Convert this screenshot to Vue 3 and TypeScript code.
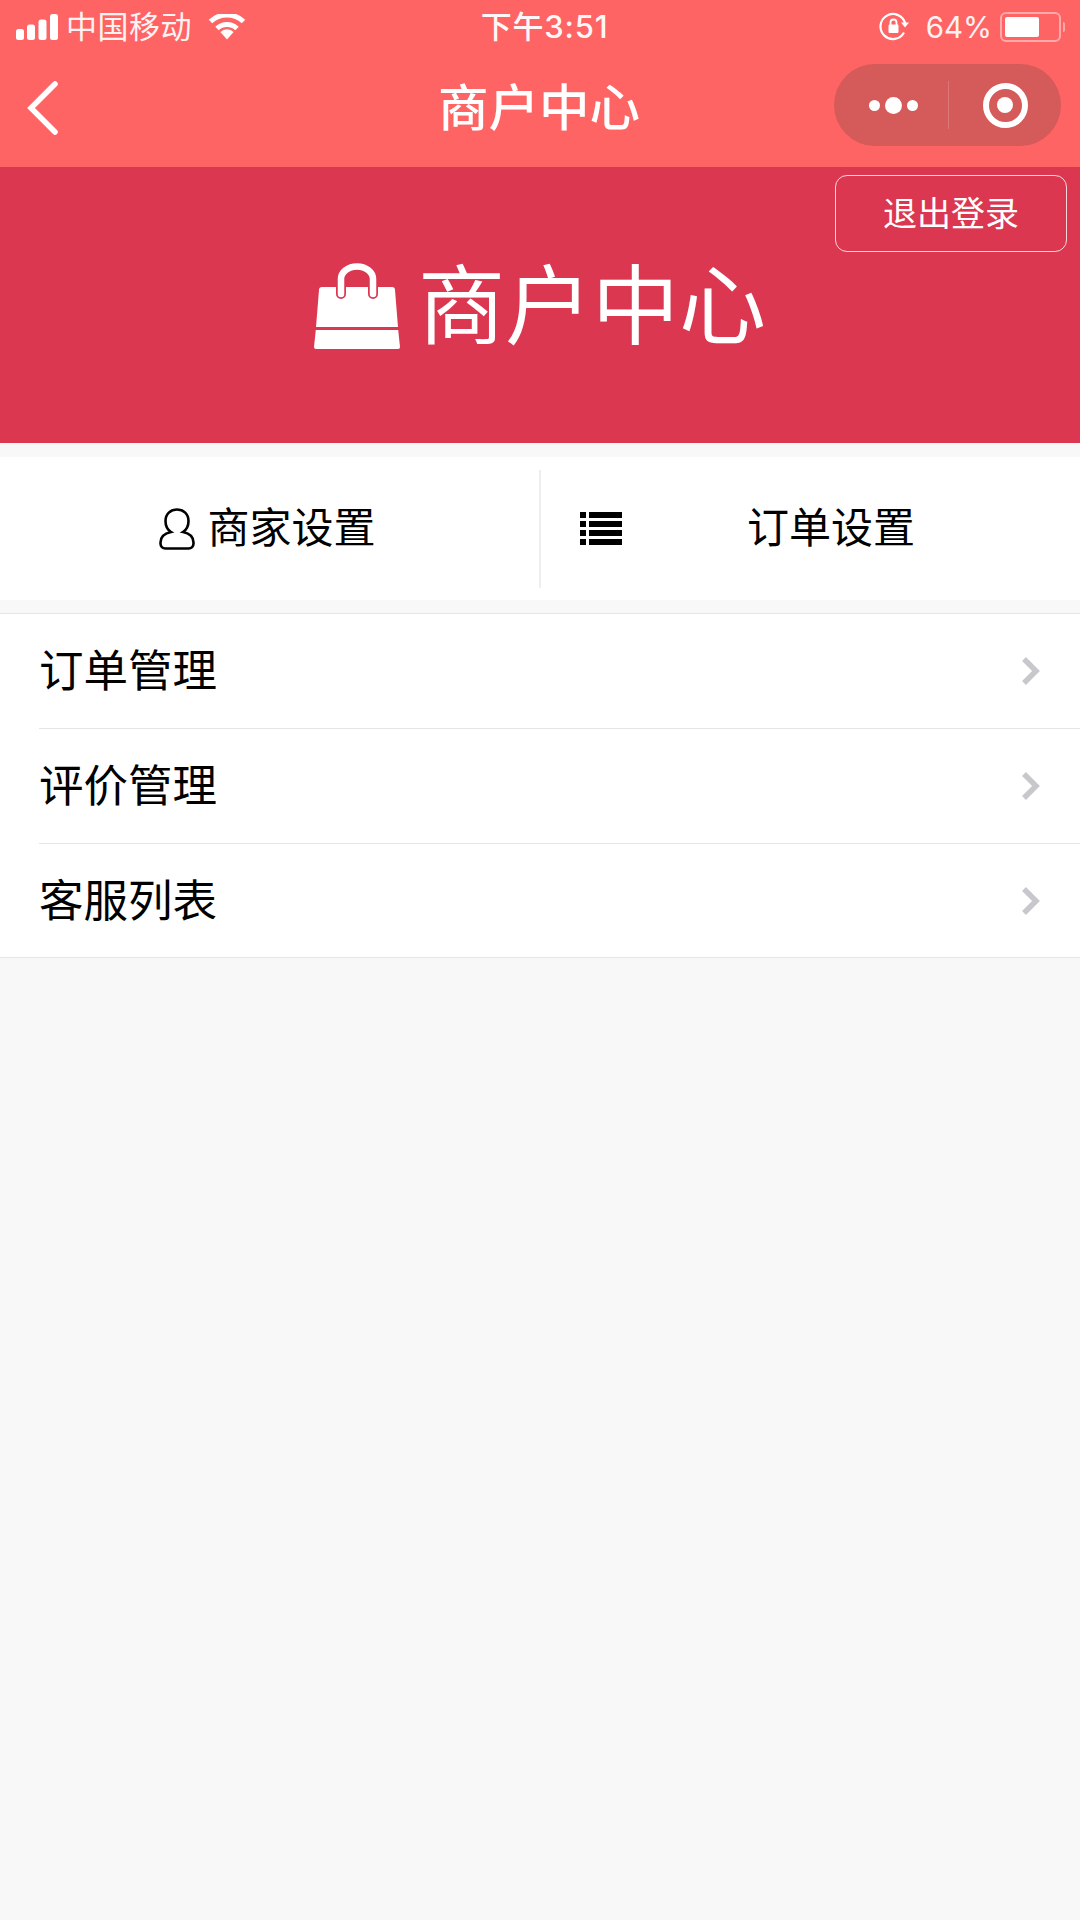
<script setup lang="ts">
const tabs = [
  { label: '商家设置', icon: 'user' },
  { label: '订单设置', icon: 'orders' },
]
const rows = ['订单管理', '评价管理', '客服列表']
</script>

<template>
  <div class="page">
    <header class="top">
      <div class="status">
        <div class="status-left">
          <svg class="signal" width="43" height="26" viewBox="0 0 43 26">
            <rect x="0" y="15" width="8" height="11" rx="2.500" />
            <rect x="11" y="10.500" width="8" height="15.500" rx="2.500" />
            <rect x="22.500" y="5.500" width="8" height="20.500" rx="2.500" />
            <rect x="34" y="0" width="8" height="26" rx="2.500" />
          </svg>
          <span class="carrier">中国移动</span>
          <svg class="wifi" width="38" height="26" viewBox="0 0 38 26">
            <path d="M19 25.500l-6.600-7.500a9.500 9.500 0 0 1 13.200 0z" fill="#fff" />
            <path d="M9 14.500a14.500 14.500 0 0 1 20 0M2.500 7.500a24 24 0 0 1 33 0" fill="none" stroke="#fff" stroke-width="5" />
          </svg>
        </div>
        <span class="time">下午3:51</span>
        <div class="status-right">
          <svg width="30" height="30" viewBox="0 0 30 30">
            <path d="M25 20.500A12.500 12.500 0 1 1 26 11" fill="none" stroke="#fff" stroke-width="2.200" />
            <path d="M22 10.500h8l-4 5z" fill="#fff" />
            <rect x="9.500" y="12.500" width="10" height="8.500" rx="1.200" fill="#fff" />
            <path d="M11.500 13V10.500a3 3 0 0 1 6 0V13" fill="none" stroke="#fff" stroke-width="1.800" />
          </svg>
          <span class="percent">64%</span>
          <div class="battery">
            <div class="battery-box"><div class="battery-fill"></div></div>
            <div class="battery-tip"></div>
          </div>
        </div>
      </div>
      <div class="nav">
        <svg class="back" width="34" height="54" viewBox="0 0 34 54">
          <path d="M29 3L5 27l24 24" fill="none" stroke="#fff" stroke-width="5.500" stroke-linecap="round" />
        </svg>
        <span class="nav-title">商户中心</span>
        <div class="capsule">
          <div class="capsule-part more">
            <i class="dot"></i><i class="dot big"></i><i class="dot"></i>
          </div>
          <div class="capsule-line"></div>
          <div class="capsule-part">
            <div class="target"><div class="target-in"></div></div>
          </div>
        </div>
      </div>
    </header>

    <section class="banner">
      <button class="logout"><span>退出登录</span></button>
      <div class="banner-title">
        <svg width="86" height="86" viewBox="0 0 86 86">
          <path d="M5 27a3 3 0 0 1 3-3H78a3 3 0 0 1 3 3l3 37H2z" fill="#fff" />
          <path d="M1.800 67H84.200l1.800 17a2 2 0 0 1-2 2H2a2 2 0 0 1-2-2z" fill="#fff" />
          <path d="M27 31V16a16 12.500 0 0 1 32 0v15" fill="none" stroke="#dc3750" stroke-width="10" stroke-linecap="round" />
          <path d="M27 31V16a16 12.500 0 0 1 32 0v15" fill="none" stroke="#fff" stroke-width="6.500" stroke-linecap="round" />
        </svg>
        <span>商户中心</span>
      </div>
    </section>

    <section class="tabs">
      <div v-for="tab in tabs" :key="tab.label" class="tab" :class="tab.icon">
        <svg v-if="tab.icon === 'user'" width="36" height="42" viewBox="0 0 36 42">
          <path d="M12 24C5 25.500 1.500 29.500 1.500 34.500v1c0 3 2 5 5 5h23c3 0 5-2 5-5v-1c0-5-3.500-9-10.500-10.500C28 21.500 29.500 17 29.500 13c0-7-5-11.500-11.500-11.500S6.500 6 6.500 13c0 4 1.500 8.500 5.500 11z" fill="none" stroke="#000" stroke-width="2.600" />
        </svg>
        <svg v-else width="42" height="33" viewBox="0 0 42 33">
          <rect x="0" y="0" width="6" height="6" /><rect x="9" y="0" width="33" height="6" />
          <rect x="0" y="9" width="6" height="6" /><rect x="9" y="9" width="33" height="6" />
          <rect x="0" y="18" width="6" height="6" /><rect x="9" y="18" width="33" height="6" />
          <rect x="0" y="27" width="6" height="6" /><rect x="9" y="27" width="33" height="6" />
        </svg>
        <span>{{ tab.label }}</span>
      </div>
    </section>

    <ul class="menu">
      <li v-for="row in rows" :key="row" class="row">
        <div class="row-inner">
          <span>{{ row }}</span>
          <svg width="20" height="30" viewBox="0 0 20 30">
            <path d="M3 3l12 12L3 27" fill="none" stroke="#c8c8cc" stroke-width="5.500" />
          </svg>
        </div>
      </li>
    </ul>
  </div>
</template>

<style>
html, body { margin: 0; background: #f8f8f8; }
</style>

<style scoped>
.page {
  width: 1080px;
  height: 1920px;
  background: #f8f8f8;
  font-family: "Noto Sans CJK SC", "Liberation Sans", sans-serif;
  overflow: hidden;
}
.top {
  height: 167px;
  background: #ff6464;
  color: #fff;
}
.status {
  height: 54px;
  position: relative;
  display: flex;
  justify-content: space-between;
  align-items: center;
  padding: 0 15px 0 16px;
}
.status-left { display: flex; align-items: center; }
.signal { fill: #fff; }
.carrier { font-size: 31px; letter-spacing: .5px; margin-left: 7px; margin-bottom: 5px; opacity: .92; }
.wifi { margin-left: 16px; }
.time {
  position: absolute;
  left: 9px;
  right: 0;
  text-align: center;
  font-size: 31px;
  font-family: Inter, "Noto Sans CJK SC", sans-serif;
  font-weight: 500;
  letter-spacing: .8px;
  margin-bottom: 5px;
  opacity: .95;
}
.status-right { display: flex; align-items: center; }
.percent {
  font-size: 29.500px;
  margin-left: 17px;
  margin-right: 8px;
  font-family: Inter, sans-serif;
  opacity: .92;
}
.battery { display: flex; align-items: center; }
.battery-box {
  width: 61px;
  height: 30px;
  border: 2px solid rgba(255, 255, 255, .45);
  border-radius: 6px;
  padding: 3px;
  box-sizing: border-box;
}
.battery-fill { width: 34px; height: 100%; background: #fff; border-radius: 2px; }
.battery-tip { width: 2px; height: 10px; margin-left: 2px; background: rgba(255, 255, 255, .45); border-radius: 0 2px 2px 0; }
.nav {
  height: 113px;
  position: relative;
  display: flex;
  align-items: center;
  justify-content: space-between;
  padding: 0 19px 0 26px;
}
.back { margin-top: -5px; }
.nav-title {
  position: absolute;
  left: -2px;
  right: 0;
  top: 20px;
  text-align: center;
  font-size: 50.500px;
  line-height: 60px;
  font-weight: 500;
}
.capsule {
  width: 227px;
  height: 82px;
  margin-top: -11px;
  border-radius: 41px;
  background: #d55a5a;
  display: flex;
  align-items: center;
}
.capsule-part {
  flex: 1;
  display: flex;
  align-items: center;
  justify-content: center;
  gap: 5px;
}
.capsule-part.more { flex: 0 0 114px; box-sizing: border-box; padding-left: 4px; }
.capsule-line { width: 1px; height: 48px; background: rgba(255, 255, 255, .18); }
.dot { width: 11px; height: 11px; border-radius: 50%; background: #fff; }
.dot.big { width: 17px; height: 17px; }
.target {
  width: 45px;
  height: 45px;
  border: 6px solid #fff;
  border-radius: 50%;
  box-sizing: border-box;
  display: flex;
  align-items: center;
  justify-content: center;
}
.target-in { width: 16px; height: 16px; border-radius: 50%; background: #fff; }
.banner {
  height: 276px;
  background: #dc3750;
  position: relative;
  display: flex;
  justify-content: center;
  color: #fff;
}
.logout {
  position: absolute;
  top: 8px;
  right: 13px;
  width: 232px;
  height: 77px;
  border: 1px solid rgba(255, 255, 255, .8);
  border-radius: 12px;
  background: transparent;
  color: #fff;
  font: inherit;
  font-size: 34px;
  padding: 0 0 5px;
}
.banner-title {
  display: flex;
  align-items: flex-start;
  gap: 18px;
  height: 110px;
  margin-top: 96px;
  font-size: 87px;
  line-height: 74px;
}
.tabs {
  height: 143px;
  margin-top: 14px;
  background: #fff;
  display: flex;
  align-items: center;
}
.tab {
  height: 118px;
  display: flex;
  align-items: center;
  font-size: 42px;
  color: #000;
}
.tab span { margin-bottom: 9px; }
.tab.user {
  flex: 0 0 541px;
  box-sizing: border-box;
  justify-content: center;
  gap: 12px;
  padding-right: 4px;
  border-right: 2px solid #eee;
}
.tab.orders { flex: 1; padding-left: 39px; gap: 125px; }
.menu {
  list-style: none;
  margin: 13px 0 0;
  padding: 0;
  background: #fff;
  border-top: 1px solid #e5e5e5;
  border-bottom: 1px solid #e5e5e5;
}
.row { padding-left: 39px; }
.row-inner {
  height: 114px;
  display: flex;
  align-items: center;
  justify-content: space-between;
  padding-right: 39px;
  font-size: 44.500px;
  color: #000;
  border-bottom: 1px solid #e5e5e5;
}
.row-inner span { margin-bottom: 7px; }
.row:last-child .row-inner { height: 113px; border-bottom: 0; }
</style>
